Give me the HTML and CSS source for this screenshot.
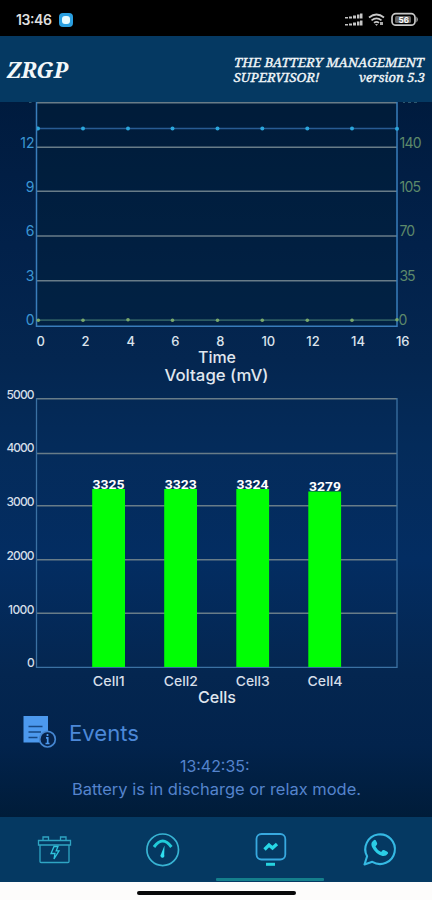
FILE: index.html
```
<!DOCTYPE html>
<html lang="en">
<head>
<meta charset="utf-8">
<title>ZRGP</title>
<link rel="stylesheet" href="styles.css">
</head>
<body>
<div class="status">
  <svg width="432" height="36" viewBox="0 0 432 36">
    <text class="clock" x="16" y="25" textLength="36">13:46</text>
    <rect x="59" y="13" width="14" height="14" rx="4" fill="#2a9fe0"/>
    <rect x="62" y="16" width="8" height="8" rx="3" fill="#e8fbff"/>
    <g fill="#c4c4c4">
      <path d="M345 17h3v1.500h-3zM349 16.500h3v2h-3zM353 15.500h3v3h-3zM357 14.500h2.500v4h-2.500zM360 13.500h2.500v5h-2.500z"/>
      <path d="M345 24h3v1.500h-3zM349 23.500h3v2h-3zM353 22.500h3v3h-3zM357 21.500h2.500v4h-2.500zM360 20.500h2.500v5h-2.500z"/>
    </g>
    <g fill="none" stroke="#c8c8c8" stroke-width="1.700">
      <path d="M369 17.500q7.500-6 15 0M371.500 20.300q5-4 10 0M374 22.800q2.500-2 5 0"/>
      <rect x="392" y="13.700" width="23" height="11.500" rx="3.800"/>
    </g>
    <path d="M375 24l1.500 2 1.500-2zM380 22h3v3h-3z" fill="#aaa"/>
    <path d="M416.500 16.500q2.500 3 0 6z" fill="#c8c8c8"/>
    <rect x="395" y="16" width="16" height="7" rx="1.500" fill="#666"/>
    <text class="charge" x="398.500" y="22.800" textLength="10.500">56</text>
  </svg>
</div>
<header class="header">
  <svg width="432" height="66" viewBox="0 36 432 66">
    <text class="brand" x="6.500" y="77.700" textLength="62" lengthAdjust="spacingAndGlyphs">ZRGP</text>
    <text class="tag" x="234" y="66.700" textLength="190" lengthAdjust="spacingAndGlyphs">THE BATTERY MANAGEMENT</text>
    <text class="tag" x="233.500" y="82.300" textLength="86" lengthAdjust="spacingAndGlyphs">SUPERVISOR!</text>
    <text class="tag" x="359" y="82.300" textLength="66" lengthAdjust="spacingAndGlyphs">version 5.3</text>
  </svg>
</header>
<main class="main">
  <svg class="chart" width="432" height="284" viewBox="0 102 432 284">
    <rect x="37" y="103" width="360" height="223" fill="#001f35" opacity=".4"/>
    <path class="grid" d="M37 102.800h360M37 147.300h360M37 191.300h360M37 236h360M37 280.700h360"/>
    <path class="axis strong" d="M36.500 102v224.300h360.500V102"/>
    <path d="M37 128.500h360" stroke="#285b93" stroke-width="1.700"/>
    <g fill="#2ba6dc">
      <path d="M37 126.500h1a2 2 0 0 1 0 4h-1z"/><circle cx="83" cy="128.500" r="2"/><circle cx="128" cy="128.500" r="2"/><circle cx="172.500" cy="128.500" r="2"/><circle cx="217.500" cy="128.500" r="2"/><circle cx="262.300" cy="128.500" r="2"/><circle cx="307.300" cy="128.500" r="2"/><circle cx="352" cy="128.500" r="2"/><circle cx="397" cy="128.700" r="2"/>
    </g>
    <path d="M37 320.200h360" stroke="#2c5b62" stroke-width="1.700"/>
    <g fill="#79a86d">
      <circle cx="38.300" cy="320.200" r="1.800"/><circle cx="83" cy="320.200" r="1.800"/><circle cx="128" cy="319.800" r="1.800"/><circle cx="172.500" cy="320.200" r="1.800"/><circle cx="217.500" cy="320.200" r="1.800"/><circle cx="262.300" cy="320.200" r="1.800"/><circle cx="307.300" cy="320.200" r="1.800"/><circle cx="352" cy="320.200" r="1.800"/><circle cx="397" cy="319.800" r="1.800"/>
    </g>
    <g class="volt">
      <text x="34.500" y="147.500">12</text><text x="34.500" y="191.900">9</text><text x="34.500" y="236.200">6</text><text x="34.500" y="280.700">3</text><text x="34.500" y="325.200">0</text>
    </g>
    <g class="amp">
      <text x="399.500" y="147.500" textLength="22">140</text><text x="399.500" y="191.900" textLength="21.500">105</text><text x="399.500" y="236.200" textLength="15.500">70</text><text x="399.500" y="280.700" textLength="16">35</text><text x="398.500" y="325.200">0</text>
    </g>
    <path d="M29 102h2.500M403 102h2M408 102h3M414 102h3" stroke="#3e6d80" stroke-width="1.500"/>
    <g class="ticks">
      <text x="40.700" y="346">0</text><text x="85.500" y="346">2</text><text x="130.700" y="346">4</text><text x="175.300" y="346">6</text><text x="220.300" y="346">8</text><text x="268.300" y="346">10</text><text x="313" y="346">12</text><text x="358" y="346">14</text><text x="402.700" y="346">16</text>
    </g>
    <text class="title" x="198" y="362.700" textLength="38" lengthAdjust="spacingAndGlyphs">Time</text>
    <text class="title" x="164.500" y="380.800" textLength="104" lengthAdjust="spacingAndGlyphs">Voltage (mV)</text>
  </svg>
  <svg class="chart" width="432" height="322" viewBox="0 386 432 322">
    <path class="grid" d="M37 398.700h360M37 453.500h360M37 505.700h360M37 559.800h360M37 613.300h360"/>
    <path class="axis" d="M36.500 398v269.300h360.500V398"/>
    <g fill="#00ff04">
      <rect x="92.200" y="489" width="32.800" height="178"/><rect x="164.200" y="489" width="32.800" height="178"/><rect x="236.300" y="489" width="32.800" height="178"/><rect x="308.300" y="491.500" width="32.800" height="175.500"/>
    </g>
    <g class="value">
      <text x="92.500" y="489" textLength="32" lengthAdjust="spacingAndGlyphs">3325</text><text x="164.700" y="489" textLength="32" lengthAdjust="spacingAndGlyphs">3323</text><text x="236.500" y="489" textLength="32" lengthAdjust="spacingAndGlyphs">3324</text><text x="309" y="491.300" textLength="32" lengthAdjust="spacingAndGlyphs">3279</text>
    </g>
    <g class="scale">
      <text x="6.500" y="399.300" textLength="28">5000</text><text x="6.500" y="452.300" textLength="28">4000</text><text x="6.500" y="506.300" textLength="28">3000</text><text x="6.500" y="559.800" textLength="28">2000</text><text x="8" y="613.500" textLength="26.500">1000</text><text x="27" y="667.300">0</text>
    </g>
    <g class="cell">
      <text x="92.800" y="686.300" textLength="32" lengthAdjust="spacingAndGlyphs">Cell1</text><text x="163.800" y="686.300" textLength="34" lengthAdjust="spacingAndGlyphs">Cell2</text><text x="235.800" y="686.300" textLength="34" lengthAdjust="spacingAndGlyphs">Cell3</text><text x="307.500" y="686.300" textLength="35" lengthAdjust="spacingAndGlyphs">Cell4</text>
    </g>
    <text class="title" x="198" y="703.300" textLength="38" lengthAdjust="spacingAndGlyphs">Cells</text>
  </svg>
  <svg class="events" width="432" height="109" viewBox="0 708 432 109">
    <path d="M23.500 716h24.500v15.500a9 9 0 0 0-8 11H23.500z" fill="#4c99ee"/>
    <path d="M28.500 726.500h14M28.500 732h12.500M28.500 737.500h9" stroke="#164884" stroke-width="1.300"/>
    <circle cx="47.500" cy="739.200" r="7.800" fill="#06234b" stroke="#4587d2" stroke-width="1.700"/>
    <path d="M47.500 734v2M46 737.800h1.700v5.500M45.500 743.500h4" stroke="#4c99ee" stroke-width="1.700" fill="none"/>
    <text class="heading" x="69" y="740.500" textLength="70" lengthAdjust="spacingAndGlyphs">Events</text>
    <text class="message" x="180" y="772.300" textLength="69.500" lengthAdjust="spacingAndGlyphs">13:42:35:</text>
    <text class="message" x="72" y="794.600" textLength="289" lengthAdjust="spacingAndGlyphs">Battery is in discharge or relax mode.</text>
  </svg>
</main>
<nav class="nav">
  <svg class="tab" viewBox="0 817 108 65">
    <g fill="none" stroke="#2fa5c3" stroke-width="1.300">
      <path d="M38.500 840.500h32v4.500h-32zM40 845v16.500q0 1 1 1h27q1 0 1-1V845M43 840v-3h5.500v3M60.500 840v-3H66v3"/>
      <path d="M54 846.500h4l-1.800 4.300h2.800l-5 8.200 1-5.500h-4z" stroke="#30c4dd"/>
    </g>
  </svg>
  <svg class="tab" viewBox="108 817 108 65">
    <circle cx="162.700" cy="849.800" r="15.800" fill="none" stroke="#38b4d3" stroke-width="1.700"/>
    <path d="M154 847q8.700-12 17.400 0" fill="none" stroke="#21cbd9" stroke-width="3"/>
    <path d="M164.500 845.500l-.3 9.300a2 2 0 1 1-3.200-.5z" fill="#30dff0"/>
  </svg>
  <div class="tab active">
    <svg class="tab" viewBox="216 817 108 65">
      <rect x="256.500" y="834" width="28.800" height="25.500" rx="5" fill="none" stroke="#38a9df" stroke-width="1.800"/>
      <path d="M264.500 849.500l4.500-4.500 3.500 3 4.500-4" fill="none" stroke="#27d6e5" stroke-width="3.300"/>
      <path d="M266 864.300h9" stroke="#26d3df" stroke-width="3"/>
    </svg>
    <div class="marker"></div>
  </div>
  <svg class="tab" viewBox="324 817 108 65">
    <path d="M364.500 864.500l2.600-8.200a14.800 14.800 0 1 1 5.200 5.500z" fill="none" stroke="#35b9e3" stroke-width="2.100" stroke-linejoin="round"/>
    <path d="M372.500 841.500q-2 2-.5 5.500 3.500 7 10.500 9 3.500.5 5.500-2.500.5-1-1-2l-3-1.500q-1-.4-1.800.6l-1 1.300q-4-1.800-5.700-5.500l1.500-2q.4-.6 0-1.600l-1.300-2.500q-1-1.500-3.200 1.200z" fill="#2bcde5"/>
  </svg>
</nav>
<footer class="gesture"><div class="pill"></div></footer>
</body>
</html>
```
FILE: styles.css
```
body {
  margin: 0;
  width: 432px;
  height: 900px;
  display: flex;
  flex-direction: column;
  overflow: hidden;
  background: #fdfcfb;
  font-family: Inter, "Noto Sans", sans-serif;
}

svg { display: block; flex: none; }

.status { height: 36px; background: #000; }
.clock { font-size: 14px; font-weight: 600; fill: #dedede; }
.charge { font-size: 8px; font-weight: 700; fill: #fff; }

.header { height: 66px; background: #053962; }
.brand, .tag {
  font-family: "Noto Serif", "Liberation Serif", serif;
  font-style: italic;
  font-weight: 700;
  fill: #f2f7f9;
}
.brand { font-size: 22px; }
.tag { font-size: 13.200px; font-weight: 400; stroke: #f2f7f9; stroke-width: .35px; }

.main {
  height: 715px;
  background: linear-gradient(#001b3e 0, #02214a 20%, #042650 36%, #042b5a 48%, #032d62 64%, #042650 80%, #02234c 90%, #001c39 100%);
}

.grid { fill: none; stroke: #687c88; stroke-width: 1.500; }
.axis { fill: none; stroke: #3b71a3; stroke-width: 1.300; }
.axis.strong { stroke: #397dbb; stroke-width: 1.500; }

.volt { font-size: 14px; fill: #3b96d4; text-anchor: end; }
.amp { font-size: 14px; fill: #5d896a; }
.ticks { font-size: 13px; font-weight: 500; fill: #dbe3ec; text-anchor: middle; }
.title { font-size: 16px; font-weight: 500; fill: #e0e7ef; }
.scale { font-size: 12px; font-weight: 500; fill: #d5dee8; }
.value { font-family: Roboto, sans-serif; font-size: 13.500px; font-weight: 700; fill: #fff; }
.cell { font-size: 13.500px; font-weight: 500; fill: #d5dee8; }
.heading { font-size: 22px; fill: #4c88d8; }
.message { font-size: 16px; fill: #5584cd; }

.nav { height: 65px; display: flex; background: #053962; }
.tab { width: 108px; height: 65px; }
.active { display: grid; }
.active > * { grid-area: 1 / 1; }
.marker { align-self: end; height: 3.500px; margin-bottom: 1px; border-radius: 1px; background: #147f8c; }

.gesture { height: 18px; display: flex; justify-content: center; align-items: center; padding-top: 4px; box-sizing: content-box; }
.pill { width: 159px; height: 4px; border-radius: 2px; background: #080808; }
```
